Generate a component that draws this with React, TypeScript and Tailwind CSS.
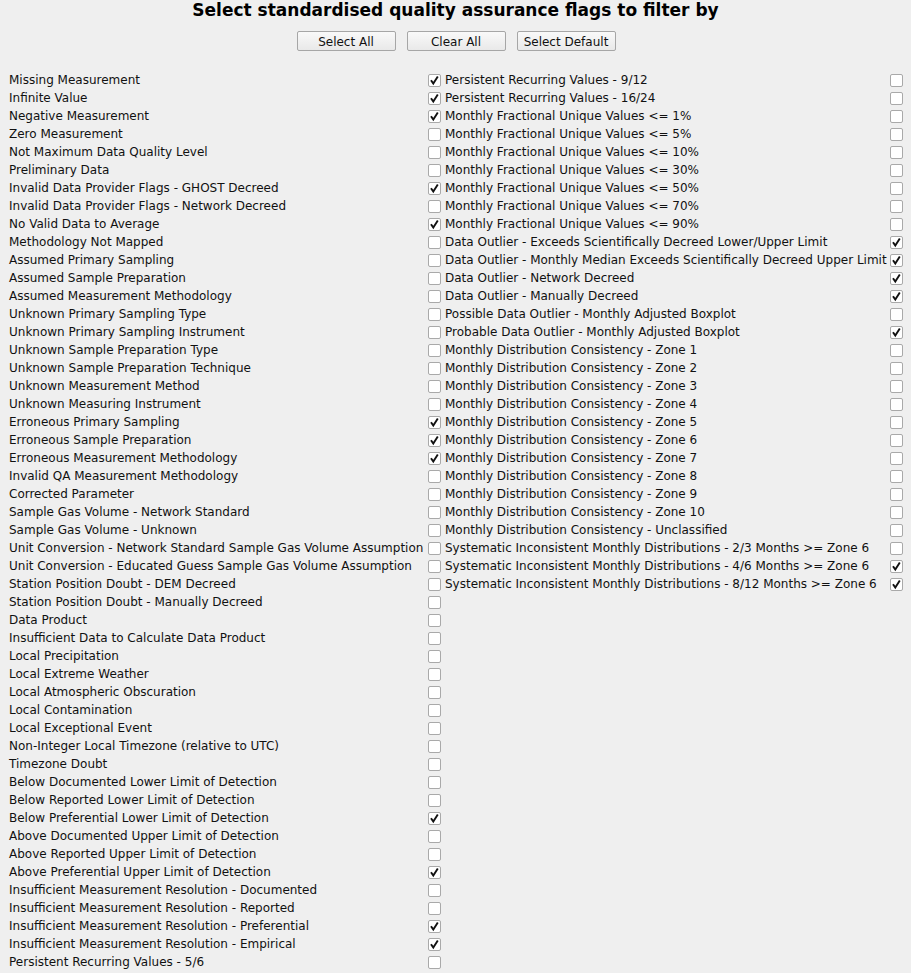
import React from "react";

const left: [string, boolean][] = [
  ["Missing Measurement", true],
  ["Infinite Value", true],
  ["Negative Measurement", true],
  ["Zero Measurement", false],
  ["Not Maximum Data Quality Level", false],
  ["Preliminary Data", false],
  ["Invalid Data Provider Flags - GHOST Decreed", true],
  ["Invalid Data Provider Flags - Network Decreed", false],
  ["No Valid Data to Average", true],
  ["Methodology Not Mapped", false],
  ["Assumed Primary Sampling", false],
  ["Assumed Sample Preparation", false],
  ["Assumed Measurement Methodology", false],
  ["Unknown Primary Sampling Type", false],
  ["Unknown Primary Sampling Instrument", false],
  ["Unknown Sample Preparation Type", false],
  ["Unknown Sample Preparation Technique", false],
  ["Unknown Measurement Method", false],
  ["Unknown Measuring Instrument", false],
  ["Erroneous Primary Sampling", true],
  ["Erroneous Sample Preparation", true],
  ["Erroneous Measurement Methodology", true],
  ["Invalid QA Measurement Methodology", false],
  ["Corrected Parameter", false],
  ["Sample Gas Volume - Network Standard", false],
  ["Sample Gas Volume - Unknown", false],
  ["Unit Conversion - Network Standard Sample Gas Volume Assumption", false],
  ["Unit Conversion - Educated Guess Sample Gas Volume Assumption", false],
  ["Station Position Doubt - DEM Decreed", false],
  ["Station Position Doubt - Manually Decreed", false],
  ["Data Product", false],
  ["Insufficient Data to Calculate Data Product", false],
  ["Local Precipitation", false],
  ["Local Extreme Weather", false],
  ["Local Atmospheric Obscuration", false],
  ["Local Contamination", false],
  ["Local Exceptional Event", false],
  ["Non-Integer Local Timezone (relative to UTC)", false],
  ["Timezone Doubt", false],
  ["Below Documented Lower Limit of Detection", false],
  ["Below Reported Lower Limit of Detection", false],
  ["Below Preferential Lower Limit of Detection", true],
  ["Above Documented Upper Limit of Detection", false],
  ["Above Reported Upper Limit of Detection", false],
  ["Above Preferential Upper Limit of Detection", true],
  ["Insufficient Measurement Resolution - Documented", false],
  ["Insufficient Measurement Resolution - Reported", false],
  ["Insufficient Measurement Resolution - Preferential", true],
  ["Insufficient Measurement Resolution - Empirical", true],
  ["Persistent Recurring Values - 5/6", false],
];

const right: [string, boolean][] = [
  ["Persistent Recurring Values - 9/12", false],
  ["Persistent Recurring Values - 16/24", false],
  ["Monthly Fractional Unique Values <= 1%", false],
  ["Monthly Fractional Unique Values <= 5%", false],
  ["Monthly Fractional Unique Values <= 10%", false],
  ["Monthly Fractional Unique Values <= 30%", false],
  ["Monthly Fractional Unique Values <= 50%", false],
  ["Monthly Fractional Unique Values <= 70%", false],
  ["Monthly Fractional Unique Values <= 90%", false],
  ["Data Outlier - Exceeds Scientifically Decreed Lower/Upper Limit", true],
  ["Data Outlier - Monthly Median Exceeds Scientifically Decreed Upper Limit", true],
  ["Data Outlier - Network Decreed", true],
  ["Data Outlier - Manually Decreed", true],
  ["Possible Data Outlier - Monthly Adjusted Boxplot", false],
  ["Probable Data Outlier - Monthly Adjusted Boxplot", true],
  ["Monthly Distribution Consistency - Zone 1", false],
  ["Monthly Distribution Consistency - Zone 2", false],
  ["Monthly Distribution Consistency - Zone 3", false],
  ["Monthly Distribution Consistency - Zone 4", false],
  ["Monthly Distribution Consistency - Zone 5", false],
  ["Monthly Distribution Consistency - Zone 6", false],
  ["Monthly Distribution Consistency - Zone 7", false],
  ["Monthly Distribution Consistency - Zone 8", false],
  ["Monthly Distribution Consistency - Zone 9", false],
  ["Monthly Distribution Consistency - Zone 10", false],
  ["Monthly Distribution Consistency - Unclassified", false],
  ["Systematic Inconsistent Monthly Distributions - 2/3 Months >= Zone 6", false],
  ["Systematic Inconsistent Monthly Distributions - 4/6 Months >= Zone 6", true],
  ["Systematic Inconsistent Monthly Distributions - 8/12 Months >= Zone 6", true],
];

function Box({ checked }: { checked: boolean }) {
  return (
    <div className="w-[13px] h-[13px] bg-white border border-[#a9a9a9] rounded-[2px] flex items-center justify-center">
      {checked && (
        <svg width="11" height="11" viewBox="0 0 11 11">
          <path d="M2 5.2 L4.3 8.6 L8.8 1.6" fill="none" stroke="#111" strokeWidth="1.9" strokeLinecap="butt" strokeLinejoin="miter" />
        </svg>
      )}
    </div>
  );
}

function Btn({ children }: { children: React.ReactNode }) {
  return (
    <button className="w-[99px] h-[20px] border border-[#a6a6a6] rounded-[2px] bg-gradient-to-b from-[#f9f9f9] to-[#e9e9e9] text-[12px] leading-none text-[#111] pt-[1px]">
      {children}
    </button>
  );
}

export default function App() {
  const rows = left.map((l, i) => ({ l, r: right[i] }));
  return (
    <div
      className="w-[911px] h-[973px] bg-[#efefef] text-[#111] overflow-hidden"
      style={{ fontFamily: '"DejaVu Sans", sans-serif' }}
    >
      <div className="h-[20px] flex items-center justify-center text-[17px] font-bold leading-none text-black pt-[1px]">
        Select standardised quality assurance flags to filter by
      </div>
      <div className="flex justify-center gap-[11px] mt-[11px] pl-[1px]">
        <Btn>Select All</Btn>
        <Btn>Clear All</Btn>
        <Btn>Select Default</Btn>
      </div>
      <div className="mt-[20px] pl-[9px] grid grid-cols-[419px_17px_445px_13px] text-[12px]">
        {rows.map(({ l, r }, i) => (
          <React.Fragment key={i}>
            <div className="h-[18px] flex items-center whitespace-nowrap">{l[0]}</div>
            <div className="h-[18px] flex items-center">
              <Box checked={l[1]} />
            </div>
            <div className="h-[18px] flex items-center whitespace-nowrap">{r ? r[0] : ""}</div>
            <div className="h-[18px] flex items-center">{r && <Box checked={r[1]} />}</div>
          </React.Fragment>
        ))}
      </div>
    </div>
  );
}
